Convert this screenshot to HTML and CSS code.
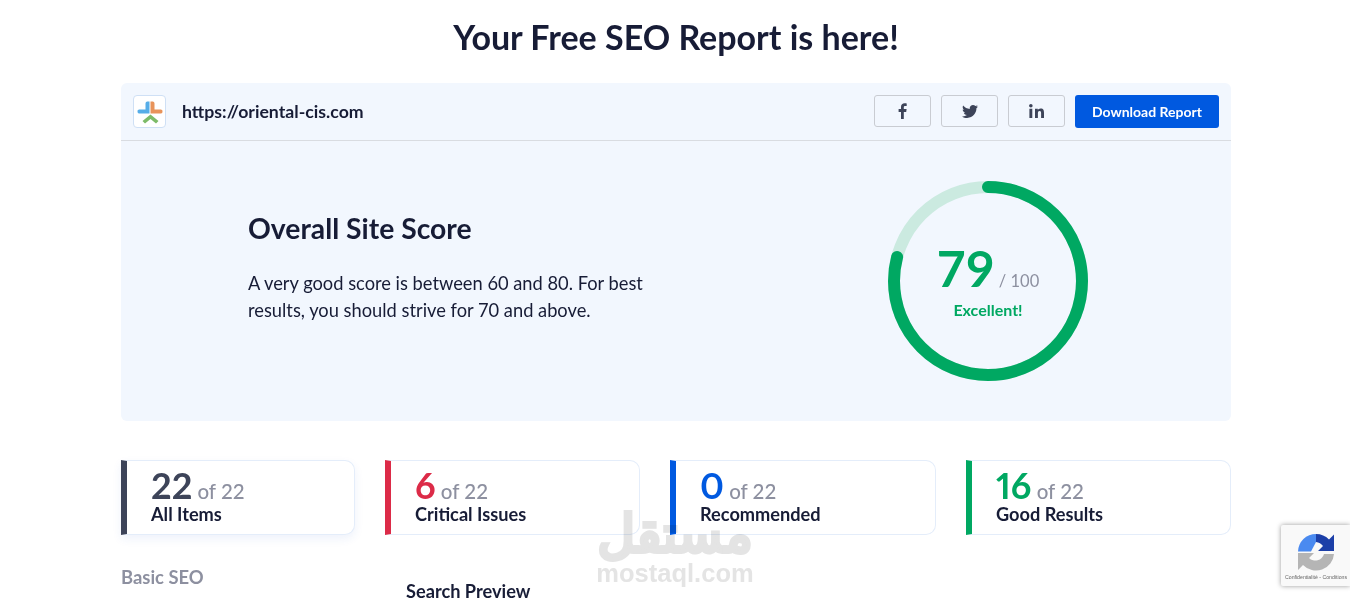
FILE: index.html
```html
<!DOCTYPE html>
<html lang="en">
<head>
  <meta charset="UTF-8">
  <meta name="viewport" content="width=device-width, initial-scale=1.0">
  <title>Free SEO Report</title>
  <link rel="stylesheet" href="styles.css">
</head>
<body>
  <div class="container">
    <h1>Your Free SEO Report is here!</h1>

    <div class="report-card">
      <div class="report-head">
        <div class="site-logo">
          <svg width="26" height="26" viewBox="0 0 26 26">
            <path d="M10 2.500h2.500v12H2a1.800 1.800 0 0 1-1.500-1.800 1.800 1.800 0 0 1 1.500-2.200h6.500v-6A2 2 0 0 1 10 2.500z" fill="#56ade8"/>
            <path d="M13.500 2.500H16a2 2 0 0 1 1.500 2v6H24a1.800 1.800 0 0 1 1.500 2.200A1.800 1.800 0 0 1 24 14.500H13.500z" fill="#e8935a"/>
            <path d="M13.500 15.500l8 6.500-2.500 2.500-5.500-4.500-5.500 4.500L5.500 22z" fill="#7dbb68"/>
          </svg>
        </div>
        <span class="site-url">https://oriental-cis.com</span>
        <div class="head-actions">
          <a class="share-btn" href="#">
            <svg width="9" height="16" viewBox="0 0 9 16"><path d="M5.800 16V8.900h2.400l.4-2.800H5.800V4.400c0-.8.200-1.400 1.400-1.400h1.500V.5C8.400.4 7.600.3 6.600.3 4.500.3 3 1.600 3 4v2.100H.6v2.800H3V16z" fill="#3d4459"/></svg>
          </a>
          <a class="share-btn" href="#">
            <svg width="16" height="13" viewBox="0 0 16 13"><path d="M14.400 3.200v.4c0 4.300-3.300 9.300-9.300 9.300-1.900 0-3.600-.5-5.100-1.500.3 0 .5.100.8.100 1.500 0 2.900-.5 4.100-1.400-1.400 0-2.600-1-3.100-2.300.2 0 .4.100.6.100.3 0 .6 0 .9-.1C1.800 7.500.7 6.200.7 4.600c.4.200 1 .4 1.500.4C1.300 4.400.7 3.400.7 2.300c0-.6.200-1.200.4-1.700C2.700 2.600 5.100 3.900 7.800 4c0-.2-.1-.5-.1-.7C7.700 1.500 9.200 0 11 0c.9 0 1.800.4 2.400 1 .7-.1 1.400-.4 2.100-.8-.2.700-.7 1.300-1.400 1.700.7-.1 1.300-.2 1.900-.5-.5.700-1 1.300-1.600 1.800z" fill="#3d4459"/></svg>
          </a>
          <a class="share-btn" href="#">
            <svg width="15" height="14" viewBox="0 0 15 14"><path d="M3.300 14H.4V4.700h2.900zM1.900 3.400C.9 3.400.1 2.600.1 1.700S.9 0 1.900 0s1.700.8 1.700 1.700-.8 1.700-1.700 1.700zM15 14h-2.900V9.500c0-1.100 0-2.400-1.500-2.400s-1.700 1.100-1.700 2.300V14H6V4.700h2.800V6c.4-.7 1.300-1.500 2.800-1.500 3 0 3.400 1.900 3.400 4.400z" fill="#3d4459"/></svg>
          </a>
          <a class="download-btn" href="#">Download Report</a>
        </div>
      </div>

      <div class="score-body">
        <div class="score-text">
          <h2>Overall Site Score</h2>
          <p>A very good score is between 60 and 80. For best results, you should strive for 70 and above.</p>
        </div>
        <div class="score-ring">
          <svg width="200" height="200" viewBox="0 0 200 200">
            <circle cx="100" cy="100" r="94" fill="none" stroke="#cbeae0" stroke-width="12"/>
            <circle cx="100" cy="100" r="94" fill="none" stroke="#00a862" stroke-width="12" stroke-linecap="round"
              stroke-dasharray="466.600 590.600" transform="rotate(-90 100 100)"/>
          </svg>
          <div class="ring-label">
            <div class="ring-num"><b>79</b> <span>/ 100</span></div>
            <div class="ring-word">Excellent!</div>
          </div>
        </div>
      </div>
    </div>

    <div class="stats">
      <div class="stat stat-all">
        <div class="stat-num"><b>22</b> of 22</div>
        <div class="stat-name">All Items</div>
      </div>
      <div class="stat stat-critical">
        <div class="stat-num"><b>6</b> of 22</div>
        <div class="stat-name">Critical Issues</div>
      </div>
      <div class="stat stat-rec">
        <div class="stat-num"><b>0</b> of 22</div>
        <div class="stat-name">Recommended</div>
      </div>
      <div class="stat stat-good">
        <div class="stat-num"><b>16</b> of 22</div>
        <div class="stat-name">Good Results</div>
      </div>
    </div>

    <div class="lower">
      <div class="side-title">Basic SEO</div>
      <div class="preview-title">Search Preview</div>
    </div>
  </div>

  <!-- watermark -->
  <div class="watermark">
    <div class="wm-ar" lang="ar" dir="rtl">مستقل</div>
    <div class="wm-en">mostaql.com</div>
  </div>

  <!-- recaptcha badge -->
  <div class="recaptcha">
    <svg width="38" height="38" viewBox="0 0 38 38">
      <path d="M19 1V9L14 18.500H1A18 18 0 0 1 19 1z" fill="#4a8af0"/>
      <path d="M19 1a18 18 0 0 1 13 5.500L37 1.500V18H21l5-5a9.500 9.500 0 0 0-7-4z" fill="#1c3fa8"/>
      <path d="M1 20H17l-5 5a9 9 0 0 0 15-4H37A18 18 0 0 1 6 32L1 37z" fill="#b5b5b5"/>
    </svg>
    <div class="rc-links">Confidentialité - Conditions</div>
  </div>
</body>
</html>
```

FILE: styles.css
```css
body {
  font-family: 'Lato', sans-serif;
  margin: 0;
  height: 598px;
  overflow: hidden;
  background-color: #fff;
  color: #171c36;
}

.container {
  width: 1110px;
  margin: 0 0 0 121px;
}

h1 {
  margin: 0;
  padding-top: 17px;
  height: 83px;
  box-sizing: border-box;
  text-align: center;
  font-size: 34px;
  line-height: 40px;
  font-weight: 700;
}

/* Report card */
.report-card {
  background-color: #f2f7fe;
  border-radius: 6px;
  height: 338px;
}

.report-head {
  display: flex;
  align-items: center;
  height: 57px;
  padding: 0 12px;
  border-bottom: 1px solid #d9dce1;
}

.site-logo {
  width: 31px;
  height: 31px;
  background-color: #fff;
  border: 1px solid #cfe0f5;
  border-radius: 4px;
  display: flex;
  align-items: center;
  justify-content: center;
}

.site-url {
  margin-left: 16px;
  font-size: 17.700px;
  font-weight: 700;
}

.head-actions {
  margin-left: auto;
  display: flex;
  gap: 10px;
}

.share-btn {
  width: 55px;
  height: 30px;
  border: 1px solid #c9ccd2;
  border-radius: 3px;
  display: flex;
  align-items: center;
  justify-content: center;
}

.download-btn {
  width: 144px;
  height: 33px;
  background-color: #0059e0;
  border-radius: 3px;
  color: #fff;
  font-size: 14px;
  font-weight: 700;
  line-height: 33px;
  text-align: center;
  text-decoration: none;
}

.score-body {
  display: flex;
  justify-content: space-between;
  padding: 40px 143px 0 127px;
}

.score-text {
  width: 420px;
  padding-top: 29px;
}

.score-text h2 {
  margin: 0 0 24px;
  font-size: 28.300px;
  line-height: 36px;
  font-weight: 700;
}

.score-text p {
  margin: 0;
  font-size: 18.300px;
  line-height: 27px;
}

.score-ring {
  position: relative;
  width: 200px;
  height: 200px;
}

.ring-label {
  position: absolute;
  left: 0;
  right: 0;
  top: 69px;
  text-align: center;
}

.ring-num {
  line-height: 37px;
}

.ring-num b {
  font-size: 50px;
  line-height: 37px;
  font-weight: 700;
  color: #00a862;
}

.ring-num span {
  font-size: 16.500px;
  color: #8d90a0;
}

.ring-word {
  font-size: 16px;
  line-height: 20px;
  font-weight: 700;
  color: #00a862;
}

/* Stat cards */
.stats {
  display: grid;
  grid-template-columns: 234px 255px 266px 265px;
  gap: 30px;
  margin-top: 39px;
}

.stat {
  height: 75px;
  box-sizing: border-box;
  padding: 10px 0 0 24px;
  background-color: #fff;
  border: 1px solid #e4edfa;
  border-left: 6px solid #3d4459;
  border-radius: 0 10px 10px 0;
}

.stat-all {
  box-shadow: 0 4px 10px rgba(40, 90, 200, 0.08);
}

.stat-num {
  font-size: 20.500px;
  line-height: 28px;
  font-weight: 500;
  color: #8d90a0;
}

.stat-num b {
  font-size: 36px;
  line-height: 28px;
  font-weight: 700;
  font-variant-numeric: proportional-nums;
}

.stat-name {
  font-size: 18.200px;
  line-height: 18px;
  font-weight: 700;
}

.stat-all b { color: #3d4459; }

.stat-critical { border-left-color: #dc2b48; }
.stat-critical b { color: #dc2b48; }

.stat-rec { border-left-color: #0059e0; }
.stat-rec b { color: #0059e0; }

.stat-good { border-left-color: #00a862; }
.stat-good b { color: #00a862; }

/* Below the cards */
.lower {
  display: flex;
  align-items: flex-start;
  margin-top: 31px;
}

.side-title {
  width: 285px;
  font-size: 18.400px;
  line-height: 22px;
  font-weight: 700;
  color: #8d90a0;
}

.preview-title {
  margin-top: 18px;
  font-size: 18.200px;
  line-height: 14px;
  font-weight: 700;
}

/* Overlays */
.watermark {
  position: absolute;
  left: 595px;
  top: 508px;
  width: 160px;
  text-align: center;
  color: #e4e4e4;
  font-family: 'DejaVu Sans', sans-serif;
  font-weight: 700;
  mix-blend-mode: multiply;
}

.wm-ar {
  font-size: 52px;
  font-weight: 400;
  line-height: 52px;
  -webkit-text-stroke: 4px #e4e4e4;
}

.wm-en {
  font-family: 'Liberation Sans', sans-serif;
  font-size: 25.500px;
  line-height: 26px;
}

.recaptcha {
  position: fixed;
  left: 1281px;
  top: 525px;
  width: 69px;
  height: 61px;
  box-sizing: border-box;
  padding: 8px 0 0 4px;
  background-color: #f9f9f9;
  border-radius: 2px 0 0 2px;
  box-shadow: 0 0 5px rgba(0, 0, 0, 0.4);
}

.recaptcha svg {
  display: block;
  margin: 0 0 2px 12px;
}

.rc-links {
  font-family: 'Liberation Sans', sans-serif;
  font-size: 5.200px;
  line-height: 8px;
  white-space: nowrap;
  color: #666;
}
```
